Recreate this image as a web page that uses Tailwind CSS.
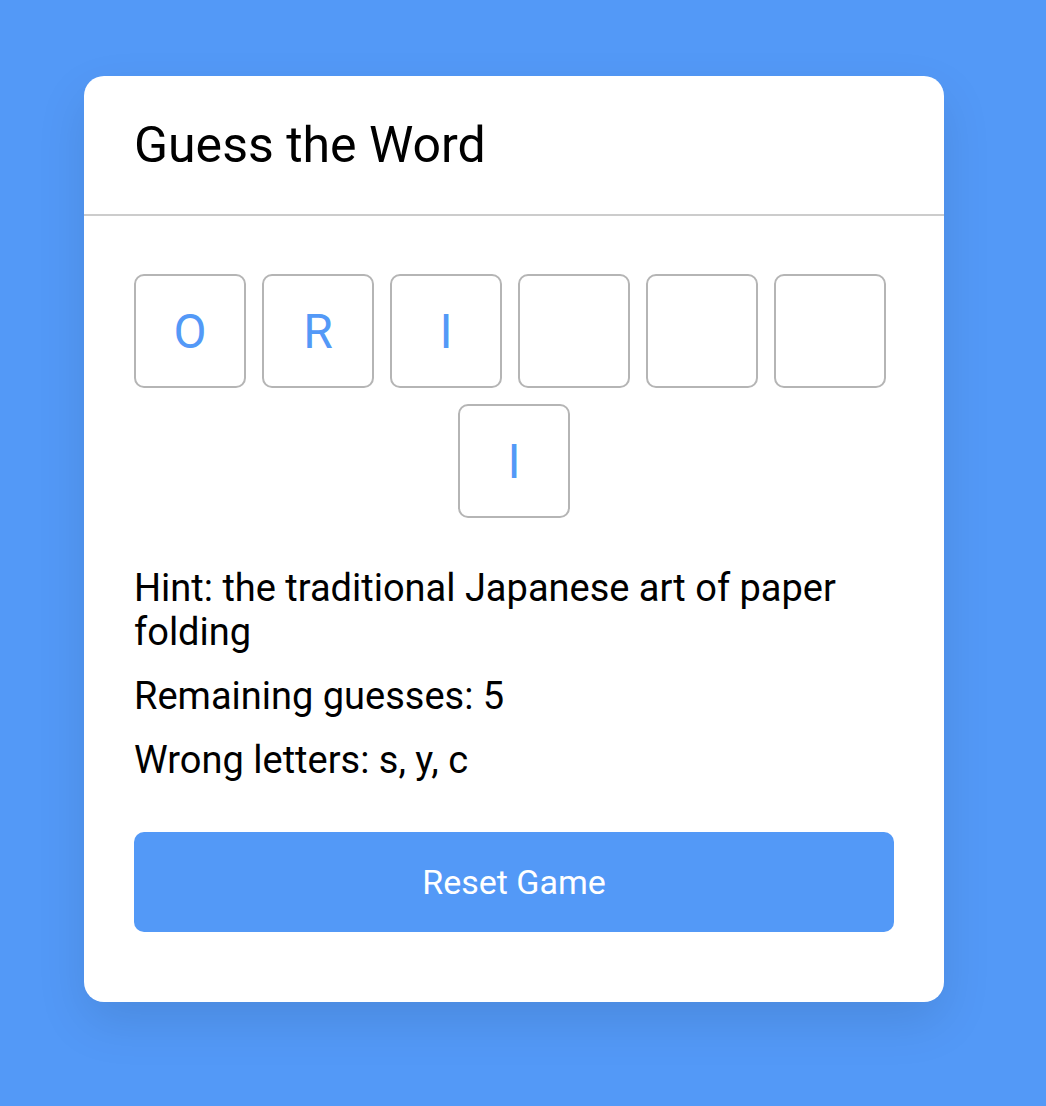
<!DOCTYPE html>
<html lang="en">
<head>
<meta charset="utf-8">
<meta name="viewport" content="width=device-width, initial-scale=1">
<title>Guess the Word</title>
<script src="https://cdn.jsdelivr.net/npm/@tailwindcss/browser@4"></script>
</head>
<body class="min-h-screen bg-[#5399f7] font-['Roboto',sans-serif] text-black">
<div class="flex min-h-screen items-center justify-center pt-[76px] pr-[102px] pb-[104px] pl-[84px]">
  <main class="w-full max-w-[860px] rounded-[20px] bg-white shadow-[0_20px_50px_rgba(0,0,0,0.1)]">
    <h1 class="border-b-2 border-[#ccc] px-[50px] py-10 text-[50px] leading-[58px]">Guess the Word</h1>
    <div class="px-[50px] pt-[58px] pb-[70px]">
      <div class="flex flex-wrap gap-4">
        <input type="text" aria-label="Letter 1" class="h-[114px] w-28 rounded-[10px] border-2 border-[#b5b5b5] bg-white text-center text-[48px] text-[#5399f7] uppercase" value="O" disabled>
        <input type="text" aria-label="Letter 2" class="h-[114px] w-28 rounded-[10px] border-2 border-[#b5b5b5] bg-white text-center text-[48px] text-[#5399f7] uppercase" value="R" disabled>
        <input type="text" aria-label="Letter 3" class="h-[114px] w-28 rounded-[10px] border-2 border-[#b5b5b5] bg-white text-center text-[48px] text-[#5399f7] uppercase" value="I" disabled>
        <input type="text" aria-label="Letter 4" class="h-[114px] w-28 rounded-[10px] border-2 border-[#b5b5b5] bg-white text-center text-[48px] text-[#5399f7] uppercase" disabled>
        <input type="text" aria-label="Letter 5" class="h-[114px] w-28 rounded-[10px] border-2 border-[#b5b5b5] bg-white text-center text-[48px] text-[#5399f7] uppercase" disabled>
        <input type="text" aria-label="Letter 6" class="h-[114px] w-28 rounded-[10px] border-2 border-[#b5b5b5] bg-white text-center text-[48px] text-[#5399f7] uppercase" disabled>
        <input type="text" aria-label="Letter 7" class="mx-auto h-[114px] w-28 rounded-[10px] border-2 border-[#b5b5b5] bg-white text-center text-[48px] text-[#5399f7] uppercase" value="I" disabled>
      </div>
      <div class="mt-12 flex flex-col gap-5 text-[38px] leading-11">
        <p>Hint: the traditional Japanese art of paper folding</p>
        <p>Remaining guesses: 5</p>
        <p>Wrong letters: s, y, c</p>
      </div>
      <button type="button" class="mt-[50px] h-[100px] w-full cursor-pointer rounded-[10px] bg-[#5399f7] text-[34px] text-white">Reset Game</button>
    </div>
  </main>
</div>
</body>
</html>
